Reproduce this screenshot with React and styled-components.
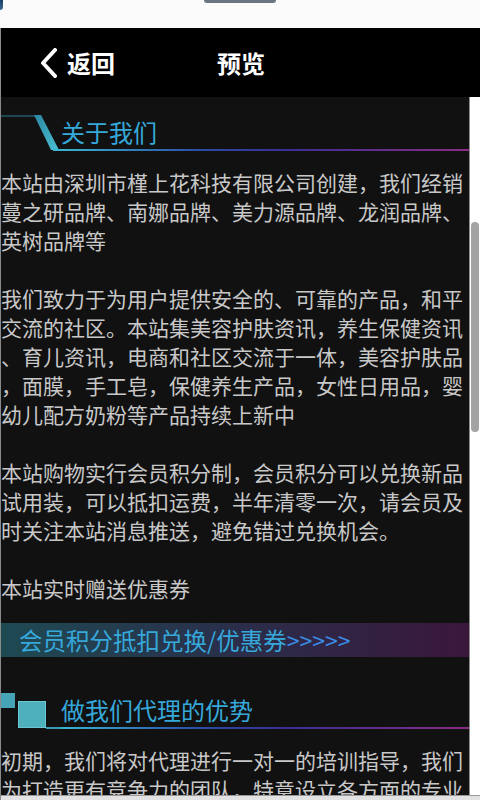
import React from 'react';
import styled, { createGlobalStyle } from 'styled-components';

const GlobalStyle = createGlobalStyle`
  html, body {
    margin: 0;
    padding: 0;
    background: #fafafa;
  }
  body {
    font-family: "Noto Sans CJK SC", "Noto Sans", sans-serif;
  }
`;

const about = [
  ['本站由深圳市槿上花科技有限公司创建，我们经销', '蔓之研品牌、南娜品牌、美力源品牌、龙润品牌、', '英树品牌等'],
  [
    '我们致力于为用户提供安全的、可靠的产品，和平',
    '交流的社区。本站集美容护肤资讯，养生保健资讯',
    '、育儿资讯，电商和社区交流于一体，美容护肤品',
    '，面膜，手工皂，保健养生产品，女性日用品，婴',
    '幼儿配方奶粉等产品持续上新中',
  ],
  ['本站购物实行会员积分制，会员积分可以兑换新品', '试用装，可以抵扣运费，半年清零一次，请会员及', '时关注本站消息推送，避免错过兑换机会。'],
  ['本站实时赠送优惠券'],
];

const agent = ['初期，我们将对代理进行一对一的培训指导，我们', '为打造更有竞争力的团队，特意设立各方面的专业'];

const App = () => {
  return (
    <Screen>
      <GlobalStyle />
      <StatusStrip>
        <Corner />
        <Pill />
      </StatusStrip>
      <Frame>
        <Header>
          <Back>
            <svg width="18" height="30" viewBox="0 0 18 30">
              <polyline points="15,2 3,15 15,28" fill="none" stroke="#fff" strokeWidth="4" strokeLinecap="round" strokeLinejoin="round" />
            </svg>
            <span>返回</span>
          </Back>
          <HeaderTitle>预览</HeaderTitle>
        </Header>
        <BodyRow>
          <Content>
            <SectionTitle>
              <svg width="60" height="40" viewBox="0 0 60 40">
                <defs>
                  <linearGradient id="slant" x1="0" y1="0" x2="1" y2="1">
                    <stop offset="0" stopColor="#2a86a2" />
                    <stop offset="1" stopColor="#4cc0d2" />
                  </linearGradient>
                </defs>
                <line x1="0" y1="5" x2="37" y2="5" stroke="#1f4452" strokeWidth="2" />
                <polygon points="33,4 40,4 58,39 50,39" fill="url(#slant)" />
                <rect x="52" y="38" width="8" height="2" fill="#3ab4d2" />
              </svg>
              <Label>关于我们</Label>
            </SectionTitle>

            <Text>
              {about.map((para, i) => (
                <Para key={i}>
                  {para.map((line) => (
                    <Line key={line}>{line}</Line>
                  ))}
                </Para>
              ))}
            </Text>

            <Banner>
              会员积分抵扣兑换/优惠券<Arrows>&gt;&gt;&gt;&gt;&gt;</Arrows>
            </Banner>

            <SectionTitle $gap={32}>
              <svg width="60" height="40" viewBox="0 0 60 40">
                <rect x="0" y="4" width="14" height="15" fill="#47a4b6" />
                <rect x="17.5" y="12.5" width="27" height="26" fill="#4eb0bd" stroke="#6cc6d0" strokeWidth="1" />
                <rect x="45" y="38" width="15" height="2" fill="#3a9cb2" />
              </svg>
              <Label>做我们代理的优势</Label>
            </SectionTitle>

            <Text $gap={17}>
              <Para>
                {agent.map((line) => (
                  <Line key={line}>{line}</Line>
                ))}
              </Para>
            </Text>
          </Content>
          <Track>
            <Thumb />
          </Track>
        </BodyRow>
        <Footer />
      </Frame>
    </Screen>
  );
};

const Screen = styled.div`
  width: 480px;
  height: 800px;
  overflow: hidden;
  background: #fafafa;
  display: flex;
  flex-direction: column;
`;

const StatusStrip = styled.div`
  position: relative;
  height: 28px;
  flex: none;
  display: flex;
  justify-content: center;
  background: #fbfbfb;
`;

const Corner = styled.div`
  position: absolute;
  left: 0;
  top: 0;
  width: 3px;
  height: 10px;
  background: linear-gradient(#1d3f66, #3a6a94);
  border-bottom-right-radius: 3px;
`;

const Pill = styled.div`
  width: 72px;
  height: 3px;
  background: #6d7582;
  border-radius: 0 0 3px 3px;
`;

const Frame = styled.div`
  flex: 1;
  display: flex;
  flex-direction: column;
  border-left: 1px solid #8a8a8a;
  min-height: 0;
`;

const Header = styled.header`
  height: 69px;
  flex: none;
  background: #000;
  display: flex;
  align-items: center;
  padding-left: 39px;
  color: #fff;
  font-size: 24px;
  font-weight: bold;
`;

const Back = styled.div`
  display: flex;
  align-items: center;
  gap: 9px;

  span {
    line-height: 1;
  }
`;

const HeaderTitle = styled.div`
  margin-left: 102px;
  line-height: 1;
`;

const BodyRow = styled.div`
  flex: 1;
  display: flex;
  min-height: 0;
`;

const Content = styled.main`
  flex: 1;
  min-width: 0;
  background: #111111;
  overflow: hidden;
  padding-top: 14px;
`;

const Track = styled.div`
  width: 10px;
  flex: none;
  background: #ffffff;
  border-left: 1px solid #8c8c8c;
  padding-top: 125px;
  display: flex;
  justify-content: center;
`;

const Thumb = styled.div`
  width: 8px;
  height: 210px;
  border-radius: 4px;
  background: #a3a3a3;
`;

const Footer = styled.div`
  height: 4px;
  flex: none;
  border-top: 1px solid #9a9a9a;
  background: #e2e2e2;
`;

const SectionTitle = styled.div`
  display: flex;
  align-items: stretch;
  height: 40px;
  margin-top: ${({ $gap }) => ($gap ? `${$gap}px` : '0')};

  svg {
    flex: none;
    display: block;
  }
`;

const Label = styled.div`
  flex: 1;
  color: #36a8da;
  font-size: 24px;
  line-height: 40px;
  padding-top: 1px;
  box-sizing: border-box;
  background: linear-gradient(90deg, #3ab4d2 0%, #2a4aa6 35%, #3a2e96 55%, #8a2c84 100%) bottom / 100% 2px no-repeat;
  white-space: nowrap;
`;

const Text = styled.div`
  margin-top: ${({ $gap }) => ($gap ? `${$gap}px` : '17px')};
  color: #c8c8c8;
  font-size: 21px;
  line-height: 29px;
  display: flex;
  flex-direction: column;
  gap: 29px;
`;

const Para = styled.p`
  margin: 0;
`;

const Line = styled.span`
  display: block;
  white-space: nowrap;
`;

const Banner = styled.div`
  margin-top: 20px;
  height: 34px;
  display: flex;
  align-items: center;
  padding-left: 18px;
  background: linear-gradient(90deg, #1e4a53 0%, #2a2e4a 50%, #3a173b 100%);
  color: #36a8da;
  font-size: 23.5px;
  white-space: nowrap;
`;

const Arrows = styled.span`
  color: #3a8ce6;
  font-size: 23px;
`;

export default App;
